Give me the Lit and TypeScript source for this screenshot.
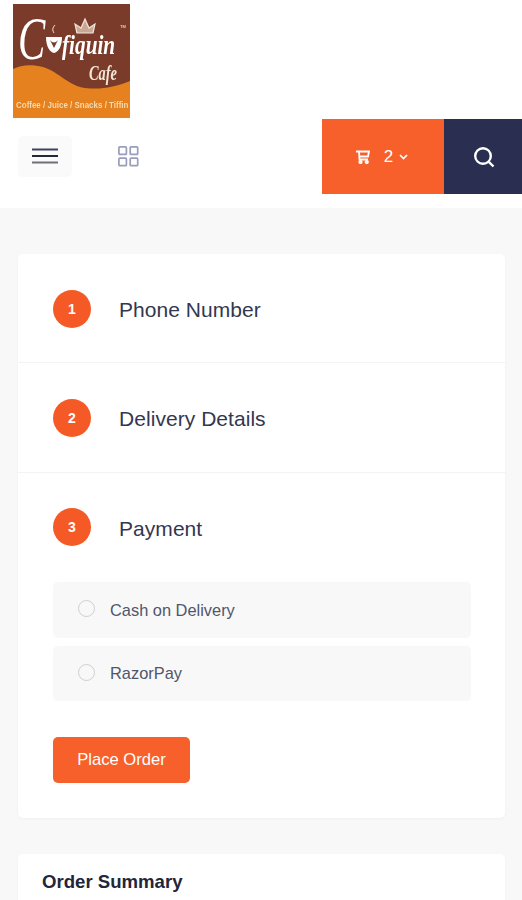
import { LitElement, html, css, svg } from "lit";
import { customElement } from "lit/decorators.js";

const logo = svg`<svg class="logo" viewBox="0 0 117 114" width="117" height="114" role="img" aria-label="Cofiquin Cafe">
  <rect width="117" height="114" fill="#7a3b2a"/>
  <path d="M0 65 C8 61 18 60 30 63 C46 68 56 82 72 84 C88 86 102 83 117 77 V114 H0Z" fill="#e5811e"/>
  <g transform="translate(5 55) scale(.66 1)"><text font-family="Liberation Serif, serif" font-style="italic" font-size="62" fill="#fff">C</text></g>
  <path d="M33 33 H49 C49 43 45 48 41 49 C37 48 33 43 33 33Z" fill="#fff"/>
  <path d="M37 36 Q41 41 45 36 L41 44Z" fill="#7a3b2a"/>
  <path d="M41 29 q-3 -4 1 -8" fill="none" stroke="#e9d8cc" stroke-width="1"/>
  <g transform="translate(49 50) scale(.76 1)"><text font-family="Liberation Serif, serif" font-style="italic" font-weight="700" font-size="28" fill="#fff">fiquin</text></g>
  <path d="M64 29 L62 20 L68 24 L72 15 L76 24 L82 20 L80 29Z" fill="#c9a895" stroke="#f2e6dc" stroke-width="1.2"/>
  <text x="107" y="24" font-family="Liberation Sans, sans-serif" font-size="4" fill="#fff">TM</text>
  <g transform="translate(76 76) scale(.72 1)"><text font-family="Liberation Serif, serif" font-style="italic" font-weight="700" font-size="20" fill="#f5e7d8">Cafe</text></g>
  <g transform="translate(3 103.5) scale(.84 1)"><text font-family="Liberation Sans, sans-serif" font-weight="700" font-size="9.5" fill="#f6d9ae">Coffee / Juice / Snacks / Tiffin</text></g>
</svg>`;

@customElement("app-root")
export class AppRoot extends LitElement {
  static styles = css`
    :host { display: block; width: 522px; height: 900px; overflow: hidden; background: #f8f8f8; font-family: "Liberation Sans", Arial, sans-serif; }
    .top { background: #fff; height: 208px; }
    .logo-row { height: 119px; padding: 4px 0 0 13px; box-sizing: border-box; }
    .logo { display: block; filter: blur(.5px); }
    .nav { display: flex; height: 75px; align-items: stretch; }
    .left { flex: 1; display: flex; align-items: center; padding: 0 0 0 18px; gap: 46px; }
    .burger { width: 54px; height: 41px; margin-top: -1px; border-radius: 5px; background: #fafafa; display: flex; align-items: center; justify-content: center; }
    .cart { width: 122px; background: #f7602b; color: #fff; display: flex; align-items: center; justify-content: center; font-size: 17px; box-sizing: border-box; padding-right: 2px; }
    .cart .n { margin: 0 6px 0 14px; }
    .search { width: 78px; background: #2a2f52; display: flex; align-items: center; justify-content: center; padding-left: 1px; box-sizing: border-box; }
    .card { background: #fff; margin: 0 17px 0 18px; border-radius: 5px; box-shadow: 0 1px 3px rgba(0,0,0,.04); }
    .steps { margin-top: 46px; height: 564px; }
    .step { display: flex; align-items: center; gap: 28px; padding: 1px 35px 0; height: 109px; box-sizing: border-box; border-bottom: 1px solid #f3f3f3; }
    .step.two { height: 110px; padding-top: 0; }
    .step.last { border-bottom: 0; height: 109px; padding: 0 35px 2px; }
    .num { width: 38px; height: 38px; flex: none; border-radius: 50%; background: #f55a26; color: #fff; font-size: 14px; font-weight: 700; display: flex; align-items: center; justify-content: center; }
    .title { font-size: 21px; color: #33374f; letter-spacing: .05px; margin-top: 2px; }
    .last .title { margin-top: 4px; }
    .options { display: flex; flex-direction: column; gap: 8px; padding: 0 34px 0 35px; }
    .opt { height: 56px; background: #f8f8f9; border-radius: 5px; display: flex; align-items: center; padding: 0 25px; gap: 15px; box-sizing: border-box; font-size: 16.4px; color: #50566a; }
    .opt + .opt { height: 55px; }
    .radio { width: 15px; height: 15px; flex: none; border: 1px solid #cfcfcf; border-radius: 50%; background: #f8f8f9; margin-top: -3px; }
    .place { display: inline-flex; margin: 36px 0 0 35px; height: 46px; width: 137px; align-items: center; justify-content: center; background: #f7602b; border-radius: 5px; color: #fff; font-size: 16.6px; }
    .summary { margin-top: 36px; padding: 17px 24px; height: 100px; box-sizing: border-box; font-size: 18.6px; font-weight: 700; color: #23263a; }
  `;

  render() {
    return html`
      <div class="top">
        <div class="logo-row">${logo}</div>
        <div class="nav">
          <div class="left">
            <div class="burger">
              <svg width="26" height="16" viewBox="0 0 26 16"><path d="M0 1.5H26" stroke="#3f4160" stroke-width="2"/><path d="M0 8H26" stroke="#26283a" stroke-width="2"/><path d="M0 14.5H26" stroke="#6f7078" stroke-width="2"/></svg>
            </div>
            <svg width="21" height="21" viewBox="0 0 21 21" fill="none" stroke="#9a9dba" stroke-width="1.7"><rect x=".9" y=".9" width="7.5" height="7.5" rx="1"/><rect x="12.2" y=".9" width="7.5" height="7.5" rx="1"/><rect x=".9" y="12.2" width="7.5" height="7.5" rx="1"/><rect x="12.2" y="12.2" width="7.5" height="7.5" rx="1"/></svg>
          </div>
          <div class="cart">
            <svg width="14" height="14" viewBox="0 0 14 14" fill="none" stroke="#fff" stroke-width="1.8"><path d="M0 1.5H13L12 6.5H2.5M3 1.5L3.5 9.5H12"/><circle cx="4.5" cy="12" r="1.2"/><circle cx="10.8" cy="12" r="1.2"/></svg>
            <span class="n">2</span>
            <svg width="9" height="6" viewBox="0 0 9 6" fill="none" stroke="#fff" stroke-width="1.6"><path d="M1 1L4.5 4.5L8 1"/></svg>
          </div>
          <div class="search">
            <svg width="22" height="22" viewBox="0 0 22 22" fill="none" stroke="#fff" stroke-width="2.4"><circle cx="10" cy="10" r="7.8"/><path d="M15.8 15.8L20.5 20.5"/></svg>
          </div>
        </div>
      </div>
      <div class="card steps">
        <div class="step"><span class="num">1</span><span class="title">Phone Number</span></div>
        <div class="step two"><span class="num">2</span><span class="title">Delivery Details</span></div>
        <div class="step last"><span class="num">3</span><span class="title">Payment</span></div>
        <div class="options">
          <div class="opt"><span class="radio"></span><span>Cash on Delivery</span></div>
          <div class="opt"><span class="radio"></span><span>RazorPay</span></div>
        </div>
        <div class="place">Place Order</div>
      </div>
      <div class="card summary">Order Summary</div>
    `;
  }
}
